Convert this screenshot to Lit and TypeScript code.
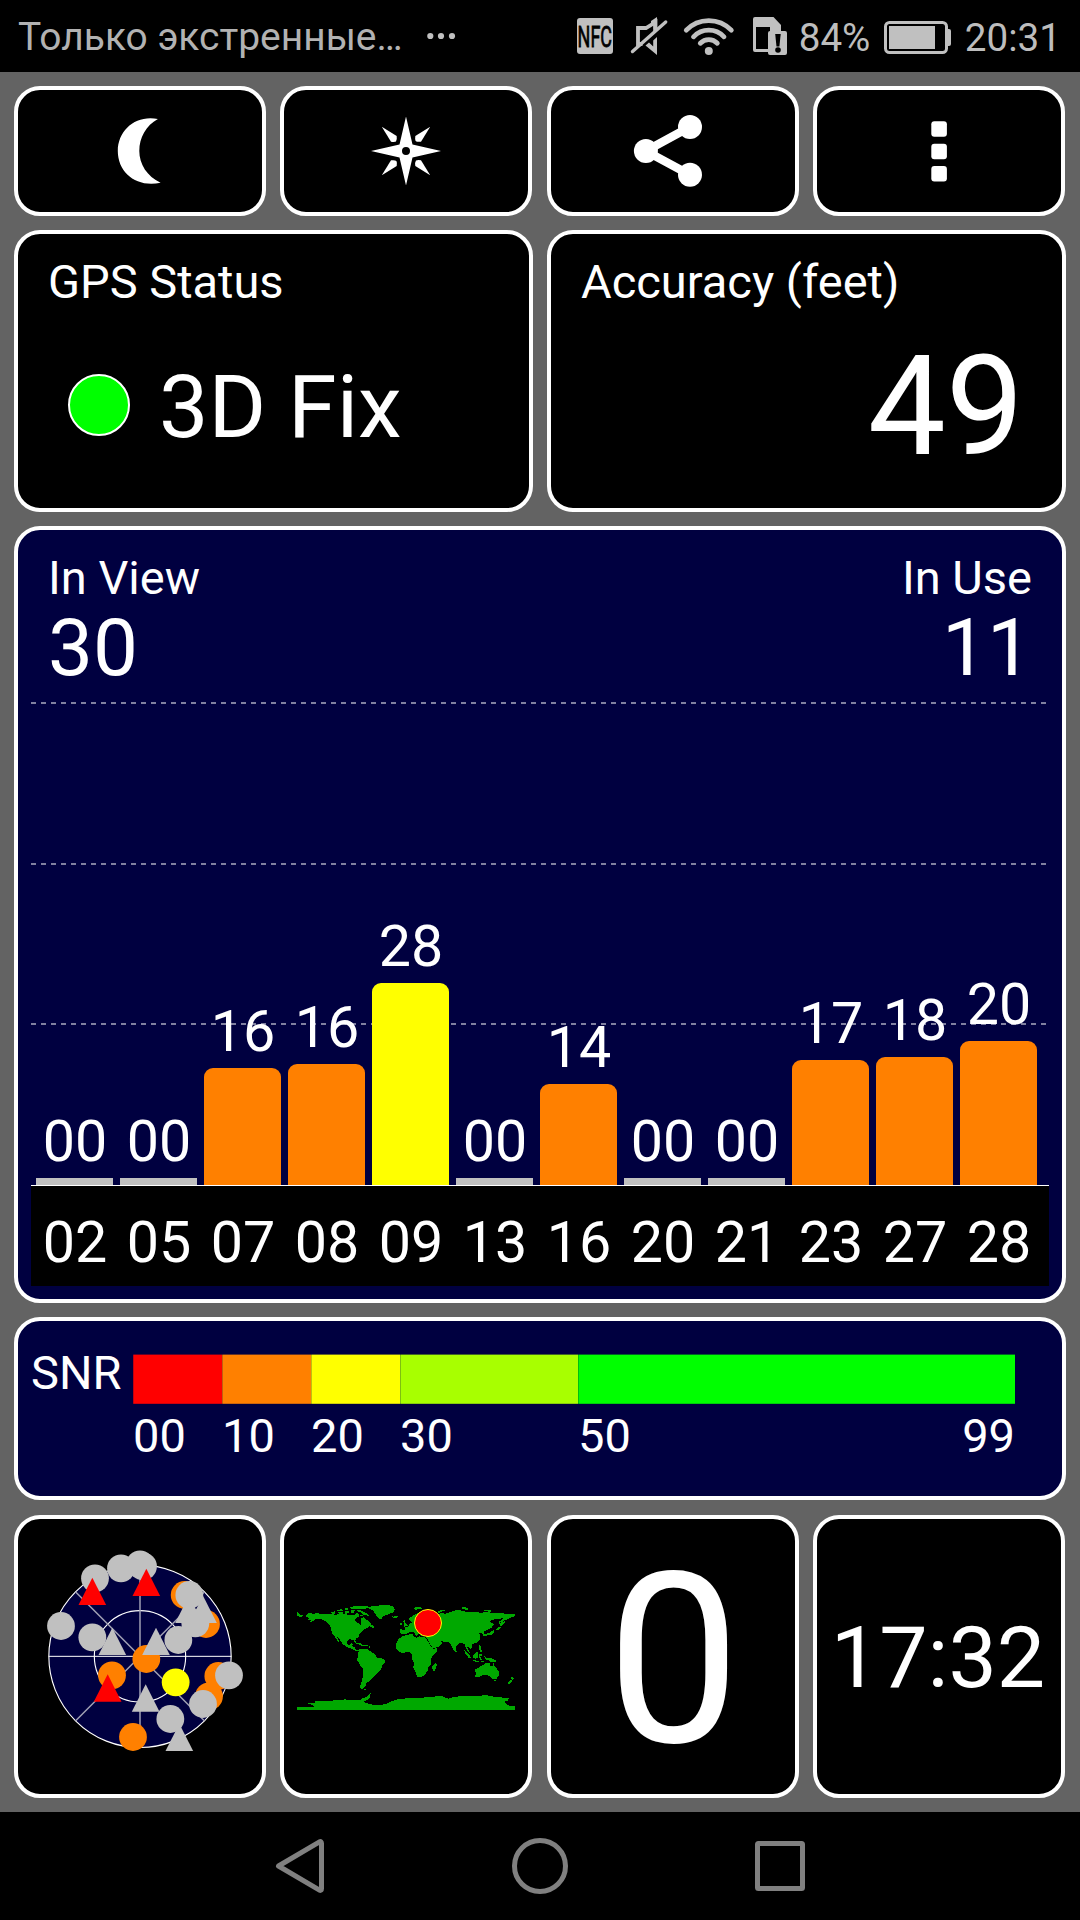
import { LitElement, html, css, svg } from "lit";
import { customElement } from "lit/decorators.js";
import { classMap } from "lit/directives/class-map.js";

interface Satellite {
  id: string;
  snr: string;
  height: number;
  level: "none" | "low" | "mid";
}

const SATELLITES: Satellite[] = [
  { id: "02", snr: "00", height: 7, level: "none" },
  { id: "05", snr: "00", height: 7, level: "none" },
  { id: "07", snr: "16", height: 117, level: "low" },
  { id: "08", snr: "16", height: 121, level: "low" },
  { id: "09", snr: "28", height: 202, level: "mid" },
  { id: "13", snr: "00", height: 7, level: "none" },
  { id: "16", snr: "14", height: 101, level: "low" },
  { id: "20", snr: "00", height: 7, level: "none" },
  { id: "21", snr: "00", height: 7, level: "none" },
  { id: "23", snr: "17", height: 125, level: "low" },
  { id: "27", snr: "18", height: 128, level: "low" },
  { id: "28", snr: "20", height: 144, level: "low" },
];

const GRAY = "#c0c0c0";
const ORANGE = "#ff8000";
const RED = "#ff0000";

/* Sky plot markers: [x, y, colour], painted in order. */
const CIRCLES: [number, number, string][] = [
  [225, 175, GRAY], [303, 145, GRAY], [360, 133, GRAY], [369, 139, GRAY],
  [494, 225, ORANGE], [508, 225, GRAY], [558, 312, ORANGE], [526, 310, GRAY],
  [475, 360, GRAY], [123, 318, GRAY], [217, 352, GRAY], [379, 417, ORANGE],
  [276, 466, ORANGE], [595, 468, ORANGE], [627, 466, GRAY], [567, 529, ORANGE],
  [549, 552, GRAY], [467, 487, "#ffff00"], [451, 597, GRAY], [339, 651, ORANGE],
];
const TRIANGLES: [number, number, string][] = [
  [507, 309, GRAY], [549, 309, GRAY], [277, 405, GRAY], [408, 405, GRAY],
  [377, 575, GRAY], [478, 693, GRAY], [217, 255, RED], [379, 228, RED], [263, 545, RED],
];

const LAND = [
  "M51 96L55 96 57 103 66 105 70 109 60 110 51 109Z",
  "M78 106L86 99 100 101 112 100 126 102 150 101 165 104 185 102 205 104 222 106 228 102 232 97 238 106 234 112 228 114 224 122 230 128 240 132 242 136 244 124 242 114 252 112 258 118 264 122 272 128 276 138 270 136 264 142 258 146 250 150 244 158 238 163 238 170 228 176 226 182 230 190 225 190 220 179 206 178 201 184 202 192 206 196 214 190 219 191 217 198 224 201 224 208 232 209 240 212 232 214 222 210 212 205 198 200 188 192 180 180 171 171 178 186 174 184 166 172 162 166 155 158 153 142 147 134 138 124 124 118 108 117 98 124 86 128 94 120 82 118 90 114 80 111Z",
  "M256 82L276 79 300 76 326 75 342 80 344 90 338 98 322 104 310 108 304 119 298 117 288 106 280 92 270 86Z",
  "M210 80L250 78 268 80 258 86 236 88 214 87Z",
  "M152 96L166 94 166 101 156 101ZM168 90L186 88 190 92 174 94ZM172 97L190 96 188 101 176 101ZM194 85L206 84 204 89 194 90ZM196 94L206 92 208 100 196 101ZM212 91L224 90 222 98 212 98ZM230 90L246 92 258 99 266 106 264 110 258 104 250 106 246 98 236 96ZM240 104L250 104 248 109 240 109Z",
  "M334 108L342 110 350 107 355 111 346 115 338 113Z",
  "M270 137L276 134 284 140 282 144 272 142Z",
  "M228 188L240 189 248 194 258 194 264 196 262 199 252 198 246 199 240 195 228 191ZM266 199L270 199 270 203 266 203Z",
  "M238 208L250 206 262 208 276 217 286 224 288 232 302 234 316 241 313 250 306 258 304 268 294 276 286 286 278 294 268 304 260 308 256 318 250 326 242 326 240 318 246 302 249 284 250 266 242 258 236 248 231 240 235 226 234 220ZM250 326L258 326 258 329 252 329Z",
  "M357 176L368 168 382 165 398 161 400 168 410 173 418 169 436 172 444 184 450 196 458 206 472 205 470 214 460 226 452 236 453 252 444 262 443 272 434 284 426 290 412 291 406 276 400 262 402 248 396 236 395 224 388 216 370 218 358 217 348 206 348 190Z",
  "M457 260L462 252 469 248 470 258 464 272 458 273Z",
  "M361 148L376 150 374 142 384 140 388 132 396 128 390 120 386 118 394 110 406 103 418 97 440 98 470 103 484 99 496 101 512 96 530 90 546 92 560 96 580 95 600 98 620 97 640 98 662 99 690 103 705 101 705 109 694 111 684 118 674 120 668 126 664 133 661 124 668 117 674 113 660 116 640 119 630 123 634 128 642 132 636 142 626 147 618 152 612 155 614 163 610 165 606 160 598 158 600 168 602 178 594 186 584 190 574 192 578 202 572 208 564 198 562 204 568 214 574 221 566 216 558 206 554 192 548 190 536 190 528 200 526 214 520 210 514 196 508 188 496 185 482 184 487 190 478 200 458 205 450 192 444 180 438 172 436 165 422 167 416 160 410 168 402 158 394 155 384 159 374 163 364 163 361 157Z",
  "M368 122L374 121 378 132 384 136 374 140 370 138 374 132ZM360 129L367 127 367 135 360 136Z",
  "M400 83L416 81 428 84 420 88 412 87 408 91ZM472 97L480 91 494 89 496 92 484 95 478 100ZM540 84L554 81 568 88 558 90ZM612 91L632 91 632 95 614 94Z",
  "M656 122L660 124 664 138 660 138ZM662 132L674 122 674 130 664 140ZM658 140L664 141 652 152 646 150ZM634 154L644 150 640 162 626 166 610 168 610 162 626 160Z",
  "M526 210L530 212 529 218 525 216ZM552 208L558 214 570 226 574 236 566 234 556 220ZM572 238L586 241 598 243 598 246 582 244ZM578 226L586 220 592 214 594 222 594 232 586 236 580 233ZM596 222L604 222 606 226 600 230 606 240 602 240 598 234ZM597 195L602 197 602 206 608 216 602 216 596 206ZM612 228L622 234 634 234 646 240 652 248 642 246 632 248 626 240 616 238ZM602 243L612 244 606 248Z",
  "M585 268L596 264 604 257 612 254 618 249 630 250 630 256 637 259 640 248 644 258 650 266 657 276 656 288 648 298 638 296 630 290 624 286 610 284 598 290 586 290 587 280ZM640 300L648 300 645 306Z",
  "M694 290L702 294 700 300 694 298ZM692 300L698 302 688 312 681 309Z",
  "M51 390L51 381 102 381 100 377 94 374 84 371 92 368 102 370 106 364 114 362 150 362 190 360 196 357 202 360 240 360 250 354 262 350 272 340 270 352 262 360 248 366 258 368 268 372 292 376 318 372 330 366 342 362 352 358 380 355 410 354 440 352 462 350 480 347 490 350 504 356 524 350 566 348 620 346 640 350 660 352 686 354 684 362 674 364 678 372 690 378 705 378 705 390Z",
].join("");

@customElement("app-root")
export class AppRoot extends LitElement {
  static styles = css`
    :host {
      display: block;
      width: 1080px;
      height: 1920px;
      font-family: Roboto, "Noto Sans", sans-serif;
      color: #fff;
      background: #636363;
      overflow: hidden;
    }
    * { box-sizing: border-box; }
    svg { display: block; flex: none; }
    .screen { display: flex; flex-direction: column; height: 1920px; }

    .status {
      display: flex;
      height: 72px;
      background: #000;
      color: #b2b2b2;
      font-size: 38.6px;
      line-height: 72px;
      padding-left: 18px;
      white-space: nowrap;
    }
    .carrier { width: 402px; padding-top: 1px; font-size: 38.95px; }
    .tray { display: flex; margin-left: 106px; }
    .percent { width: 81.3px; padding-top: 2px; color: #bdbdbd; margin-left: -1.3px; }
    .clock { padding-top: 2px; margin-left: 9.8px; color: #bdbdbd; }
    .nfc { font: 30px "Roboto", sans-serif; }

    .tiles { display: flex; flex-direction: column; padding: 14px 14px 0; height: 1740px; }
    .row { display: grid; column-gap: 14.33px; }
    .quad { grid-template-columns: repeat(4, 252px); }
    .pair { grid-template-columns: 519px 519px; column-gap: 14px; }
    .card { background: #000; border: 4px solid #fff; border-radius: 26px; overflow: hidden; }
    .buttons .card { height: 130px; }
    .pair { margin-top: 14px; }
    .pair .card { height: 282px; padding: 24px 39px 0 30px; }
    .label { font-size: 47px; line-height: 48px; white-space: nowrap; }
    .fix { display: flex; align-items: flex-start; margin-top: 57px; font-size: 88px; line-height: 88px; gap: 29px; }
    .lamp { width: 62px; height: 62px; margin: 11px 0 0 20px; border-radius: 50%; background: #0f0; border: 2px solid #fff; }
    .accuracy { margin-top: 31px; margin-right: -1px; font-size: 139px; line-height: 140px; text-align: right; }

    .navy { background: #000040; width: 1052px; }
    .chart { height: 777px; margin-top: 14px; display: flex; flex-direction: column; padding: 24px 13px 13px; }
    .counts { display: flex; justify-content: space-between; padding: 0 17px; height: 134px; }
    .count { display: flex; flex-direction: column; gap: 6px; }
    .count:last-child { align-items: flex-end; }
    .big { font-size: 80px; line-height: 80px; }
    .plot { position: relative; flex: 1; display: flex; align-items: flex-end; padding-left: 5px; gap: 7px; border-bottom: 1px solid #fff; }
    .grid {
      position: absolute;
      inset: 14px 0 auto 0;
      height: 323px;
      display: flex;
      flex-direction: column;
      justify-content: space-between;
    }
    .dash { height: 2px; background: repeating-linear-gradient(90deg, #8080a0 0 5px, transparent 5px 10px); }
    .column { position: relative; width: 77px; text-align: center; }
    .value { font-size: 57.4px; line-height: 56px; margin-bottom: 8px; padding-left: 1px; }
    .bar { border-radius: 9px 9px 0 0; }
    .none { background: #c0c0c0; border-radius: 0; }
    .low { background: #ff8000; }
    .mid { background: #ff0; }
    .ids { display: flex; gap: 7px; height: 100px; background: #000; padding: 28px 0 0 5px; font-size: 57.4px; line-height: 57px; }
    .id { width: 77px; text-align: center; padding-left: 1px; }

    .snr { height: 183px; margin-top: 14px; display: flex; padding: 28px 0 0 13px; }
    .snr .label { width: 102px; }
    .snr .marks { width: auto; margin-top: 8px; }
    .scale { width: 882px; padding-top: 5px; }
    .ramp, .marks { display: grid; grid-template-columns: 89px 89px 89px 178px 437px; }
    .ramp { height: 50px; }
    .step { box-shadow: inset 1px 0 0 rgba(0, 0, 64, 0.25), inset 0 1px 0 rgba(0, 0, 64, 0.6), inset 0 -1px 0 rgba(0, 0, 64, 0.2); }
    .s0 { background: #f00; }
    .s1 { background: #ff8000; }
    .s2 { background: #ff0; }
    .s3 { background: #a8ff00; }
    .s4 { background: #0f0; }
    .ends { display: flex; justify-content: space-between; }

    .bottom { margin-top: 15px; }
    .bottom .card { height: 283px; }
    .center { display: flex; align-items: center; justify-content: center; }
    .speed { font-size: 238px; line-height: 239px; padding: 8px 0 0 2px; }
    .time { font-size: 86.1px; line-height: 86px; padding: 2px 2px 0 0; }

    .nav { height: 108px; background: #000; display: flex; justify-content: center; gap: 180px; align-items: center; }
  `;

  private renderStatus() {
    return html`
      <div class="status">
        <div class="carrier">Только экстренные…</div>
        <svg width="44" height="72" viewBox="420 0 44 72" fill="#c0c0c0">
          <circle cx="430.3" cy="36" r="3.1" /><circle cx="441" cy="36" r="3.1" /><circle cx="452" cy="36" r="3.1" />
        </svg>
        <div class="tray">
          <svg width="55" height="72" viewBox="570 0 55 72">
            <rect x="577" y="18" width="36" height="36" rx="3" fill="#c0c0c0" />
            <text class="nfc" transform="translate(577.6 47) scale(.598 1)" fill="#000" stroke="#000" stroke-width=".8">NFC</text>
          </svg>
          <svg width="53" height="72" viewBox="625 0 53 72" fill="none" stroke="#c0c0c0">
            <path d="M655.5 29V22.2L646 28H638V44H642.5" stroke-width="3.8" />
            <path d="M657 17V30L653.2 33V24L651 25.5V21Z" fill="#c0c0c0" stroke="none" />
            <path d="M657 37V55L645.5 45.5L649 42.5L653.2 46.5V40.5Z" fill="#c0c0c0" stroke="none" />
            <path d="M632.5 51.5L665.7 22" stroke-width="3.4" stroke-linecap="round" />
          </svg>
          <svg width="65" height="72" viewBox="678 0 65 72" fill="none" stroke="#c0c0c0" stroke-width="4.8" stroke-linecap="round">
            <path d="M686.3 30.2C698.5 17.4 719 17.4 731.3 30.2" />
            <path d="M693.5 36.8C702 28 715.6 28 724 36.8" />
            <path d="M700.3 43.2C705 38.4 712.6 38.4 717.3 43.2" />
            <circle cx="708.8" cy="51" r="4" fill="#c0c0c0" stroke="none" />
          </svg>
          <svg width="57" height="72" viewBox="743 0 57 72">
            <path fill="#c0c0c0" fill-rule="evenodd" d="M755 17H773.5L781 25V31H785Q787 31 787 33V53Q787 55 785 55H770Q768 55 768 53V52H755Q753 52 753 50V19Q753 17 755 17ZM756 27V49H768V33Q768 31 770 31V27Z" />
            <path d="M775.2 34H780.7L779.4 46.5H776.5Z" fill="#000" />
            <circle cx="778" cy="50" r="2.8" fill="#000" />
          </svg>
          <div class="percent">84%</div>
          <svg width="75" height="72" viewBox="880 0 75 72">
            <rect x="885.5" y="22.5" width="61" height="30" rx="4" fill="none" stroke="#c0c0c0" stroke-width="3" />
            <rect x="889" y="26" width="46" height="23" fill="#c0c0c0" />
            <path d="M947 29H949Q951 29 951 31V44Q951 46 949 46H947Z" fill="#c0c0c0" />
          </svg>
          <div class="clock">20:31</div>
        </div>
      </div>
    `;
  }

  private renderButtons() {
    const petal = "M-24.2 -24.2L-9.3 -15Q-8.8 -11 -10 -9.6Q-11 -8.8 -15 -9.3Z";
    return html`
      <div class="row quad buttons">
        <div class="card">
          <svg width="244" height="122" viewBox="18 90 244 122" fill="#fff">
            <path d="M157.9 119C136 114.5 117.8 130 117.8 151C117.8 173 137 188 160.6 182.7C147 176.5 139.3 164 139.3 151C139.3 137.5 146 125.5 157.9 119Z" />
          </svg>
        </div>
        <div class="card">
          <svg width="244" height="122" viewBox="284 90 244 122" fill="#fff">
            <g transform="translate(406 151)">
              <path fill-rule="evenodd" d="M0 -34.5L6.5 -6.5L35 0L6.5 6.5L0 34.5L-6.5 6.5L-35 0L-6.5 -6.5ZM-4 0A4 4 0 1 0 4 0A4 4 0 1 0 -4 0Z" />
              ${[0, 90, 180, 270].map((a) => svg`<path d=${petal} transform="rotate(${a})" />`)}
            </g>
          </svg>
        </div>
        <div class="card">
          <svg width="244" height="122" viewBox="551 90 244 122" fill="#fff">
            <path d="M689.8 127L645.7 151L689.8 174.8" fill="none" stroke="#fff" stroke-width="8.4" />
            <circle cx="645.9" cy="151" r="12" /><circle cx="690" cy="127" r="12" /><circle cx="690" cy="174.8" r="12" />
          </svg>
        </div>
        <div class="card">
          <svg width="244" height="122" viewBox="817 90 244 122" fill="#fff">
            <rect x="931.3" y="121.3" width="15.6" height="15.4" rx="3" />
            <rect x="931.3" y="143.8" width="15.6" height="15.4" rx="3" />
            <rect x="931.3" y="166" width="15.6" height="15.4" rx="3" />
          </svg>
        </div>
      </div>
    `;
  }

  private renderSky() {
    return html`
      <svg width="244" height="275" viewBox="-6 -3 732 825">
        <circle cx="360" cy="409" r="273.5" fill="#000040" stroke="#fff" stroke-width="3.4" />
        <circle cx="360" cy="409" r="137" fill="none" stroke="#fff" stroke-width="3.4" />
        <path d="M360 136V682M167 216L553 602M553 216L167 602" stroke="#a0a0b4" stroke-width="4.5" />
        <path d="M86 409H634" stroke="#fff" stroke-width="3" />
        ${CIRCLES.map(([x, y, c]) => svg`<circle cx=${x} cy=${y} r="41.7" fill=${c} />`)}
        ${TRIANGLES.map(([x, y, c]) => svg`<path d="M${x} ${y - 82}L${x + 41.5} ${y}H${x - 41.5}Z" fill=${c} />`)}
      </svg>
    `;
  }

  render() {
    return html`
      <div class="screen">
        ${this.renderStatus()}
        <div class="tiles">
          ${this.renderButtons()}
          <div class="row pair">
            <div class="card">
              <div class="label">GPS Status</div>
              <div class="fix"><div class="lamp"></div><div>3D Fix</div></div>
            </div>
            <div class="card">
              <div class="label">Accuracy (feet)</div>
              <div class="accuracy">49</div>
            </div>
          </div>
          <div class="card navy chart">
            <div class="counts">
              <div class="count"><div class="label">In View</div><div class="big">30</div></div>
              <div class="count"><div class="label">In Use</div><div class="big">11</div></div>
            </div>
            <div class="plot">
              <div class="grid"><div class="dash"></div><div class="dash"></div><div class="dash"></div></div>
              ${SATELLITES.map(
                (s) => html`
                  <div class="column">
                    <div class="value">${s.snr}</div>
                    <div class=${classMap({ bar: true, [s.level]: true })} style="height:${s.height}px"></div>
                  </div>
                `
              )}
            </div>
            <div class="ids">${SATELLITES.map((s) => html`<div class="id">${s.id}</div>`)}</div>
          </div>
          <div class="card navy snr">
            <div class="label">SNR</div>
            <div class="scale">
              <div class="ramp">${[0, 1, 2, 3, 4].map((i) => html`<div class="step s${i}"></div>`)}</div>
              <div class="marks label">
                <div>00</div><div>10</div><div>20</div><div>30</div>
                <div class="ends"><span>50</span><span>99</span></div>
              </div>
            </div>
          </div>
          <div class="row quad bottom">
            <div class="card">${this.renderSky()}</div>
            <div class="card">
              <svg width="244" height="275" viewBox="12 -183 732 825">
                <path d=${LAND} fill="#00a800" shape-rendering="crispEdges" />
                <circle cx="444" cy="129" r="40.5" fill="#f00" stroke="#ff0" stroke-width="3" />
              </svg>
            </div>
            <div class="card center speed">0</div>
            <div class="card center time">17:32</div>
          </div>
        </div>
        <div class="nav">
          <svg width="60" height="60" viewBox="270 1836 60 60" fill="none" stroke="#808080" stroke-width="5" stroke-linejoin="round">
            <path d="M278.5 1866L319.5 1841.8Q321.5 1841 321.5 1843.5V1888.5Q321.5 1891 319.5 1890.2Z" />
          </svg>
          <svg width="60" height="60" viewBox="510 1836 60 60" fill="none" stroke="#808080" stroke-width="5">
            <circle cx="540" cy="1866" r="25.5" />
          </svg>
          <svg width="60" height="60" viewBox="750 1836 60 60" fill="none" stroke="#808080" stroke-width="5" stroke-linejoin="round">
            <rect x="757.5" y="1843.5" width="45" height="45" rx="1" />
          </svg>
        </div>
      </div>
    `;
  }
}
